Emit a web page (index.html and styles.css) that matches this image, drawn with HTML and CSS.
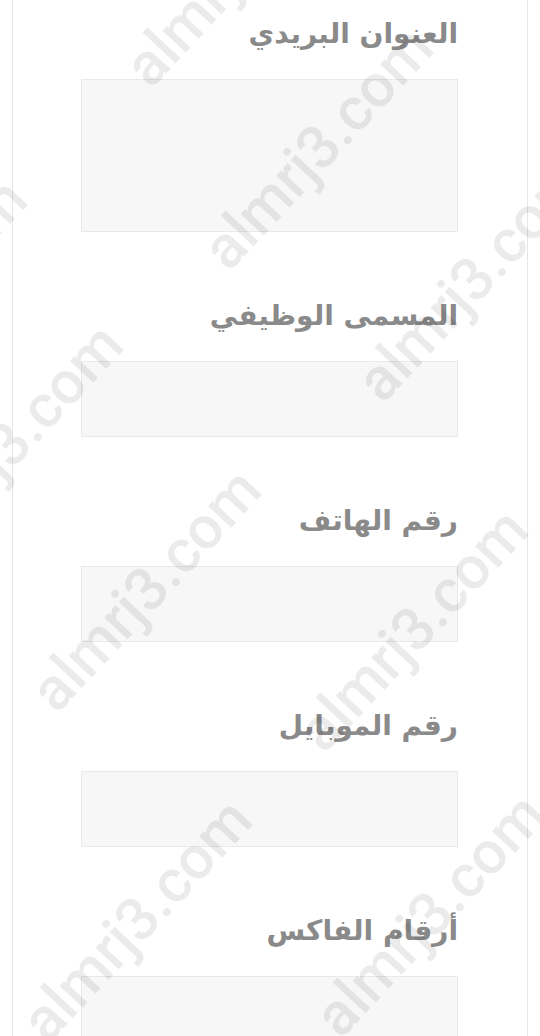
FILE: index.html
```html
<!DOCTYPE html>
<html lang="ar" dir="rtl">
<head>
<meta charset="utf-8">
<title>نموذج</title>
<link rel="stylesheet" href="styles.css">
</head>
<body>
<div class="page">
  <form class="form">
    <div class="field">
      <label class="label" for="f-address">العنوان البريدي</label>
      <textarea class="control control-area" id="f-address"></textarea>
    </div>
    <div class="field">
      <label class="label" for="f-title">المسمى الوظيفي</label>
      <input class="control" id="f-title" type="text">
    </div>
    <div class="field">
      <label class="label" for="f-phone">رقم الهاتف</label>
      <input class="control" id="f-phone" type="text">
    </div>
    <div class="field">
      <label class="label" for="f-mobile">رقم الموبايل</label>
      <input class="control" id="f-mobile" type="text">
    </div>
    <div class="field">
      <label class="label" for="f-fax">أرقام الفاكس</label>
      <input class="control" id="f-fax" type="text">
    </div>
  </form>
</div>
<div class="watermarks" aria-hidden="true">
  <span class="wm wm-a">almrj3.com</span>
  <span class="wm wm-b">almrj3.com</span>
  <span class="wm wm-c">almrj3.com</span>
  <span class="wm wm-d">almrj3.com</span>
  <span class="wm wm-e">almrj3.com</span>
  <span class="wm wm-f">almrj3.com</span>
  <span class="wm wm-g">almrj3.com</span>
  <span class="wm wm-h">almrj3.com</span>
  <span class="wm wm-i">almrj3.com</span>
</div>
</body>
</html>
```
FILE: styles.css
```css
html, body {
  margin: 0;
  padding: 0;
  background: #ffffff;
}
body {
  position: relative;
  min-height: 1036px;
  overflow: hidden;
  font-family: "DejaVu Sans", "Noto Sans", sans-serif;
}
.page {
  margin: 0 12px;
  min-height: 1036px;
  border-left: 1px solid #e6e6e6;
  border-right: 1px solid #e6e6e6;
  box-sizing: border-box;
  padding: 16px 69px 0 68px;
}
.form {
  display: flex;
  flex-direction: column;
  gap: 66px;
}
.field {
  display: flex;
  flex-direction: column;
  gap: 27px;
}
.label {
  display: block;
  font-size: 28px;
  line-height: 36px;
  font-weight: bold;
  color: #8a8a8a;
  text-align: right;
}
.control {
  display: block;
  width: 100%;
  box-sizing: border-box;
  height: 76px;
  margin: 0;
  padding: 8px 12px;
  background: #f7f7f7;
  border: 1px solid #e9e9e9;
  border-radius: 0;
  outline: none;
  font: inherit;
  resize: none;
}
.control-area {
  height: 153px;
}
.watermarks {
  position: absolute;
  inset: 0;
  pointer-events: none;
  overflow: hidden;
}
.wm {
  position: absolute;
  font-family: Roboto, "Liberation Sans", sans-serif;
  font-size: 60px;
  font-weight: 500;
  line-height: 1;
  color: rgba(0, 0, 0, 0.08);
  white-space: nowrap;
  transform: translate(-50%, -50%) rotate(-47deg);
}
.wm-a { left: 240px; top: -35px; }
.wm-b { left: 318px; top: 148px; }
.wm-c { left: 472px; top: 280px; }
.wm-d { left: -88px; top: 300px; }
.wm-e { left: 8px; top: 445px; }
.wm-f { left: 146px; top: 590px; }
.wm-g { left: 413px; top: 630px; }
.wm-h { left: 137px; top: 920px; }
.wm-i { left: 430px; top: 915px; }
```
